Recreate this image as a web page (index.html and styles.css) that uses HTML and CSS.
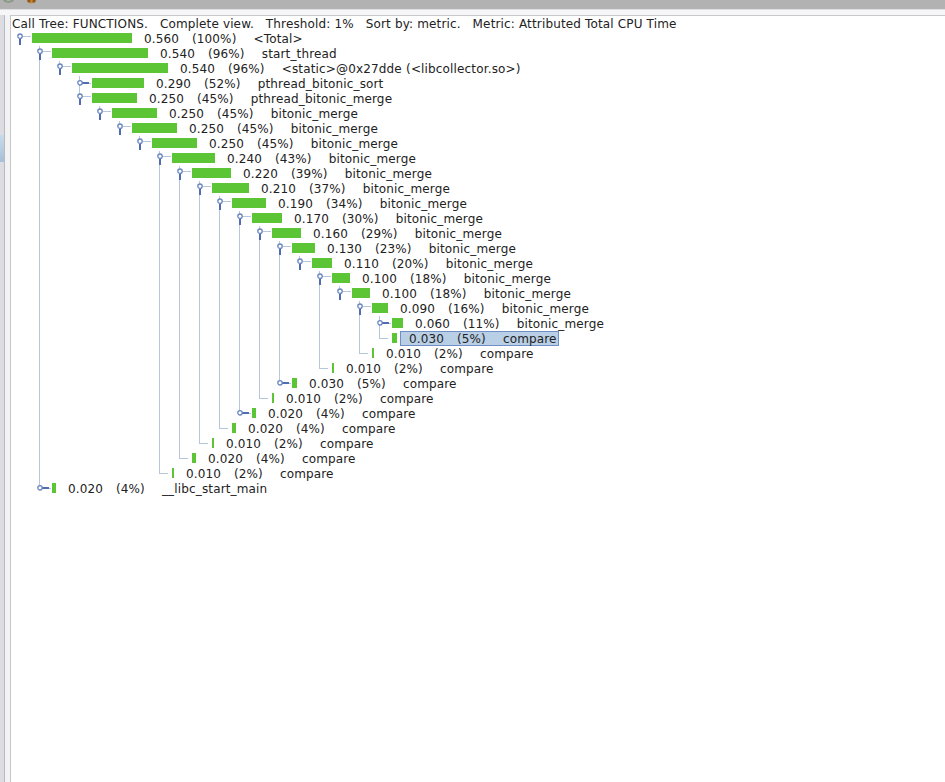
FILE: index.html
```html
<!DOCTYPE html>
<html>
<head>
<meta charset="utf-8">
<link rel="stylesheet" href="styles.css">
</head>
<body>
<div class="app">
  <div class="topbar">
    <svg class="tb-icons" width="45" height="9">
      <ellipse cx="8.5" cy="-3" rx="6.5" ry="6" fill="#8e9a88"/>
      <ellipse cx="8.5" cy="-3" rx="3.5" ry="3.5" fill="#c8d0c2"/>
      <circle cx="31.5" cy="-1.5" r="5" fill="#c98633"/>
      <circle cx="29" cy="1" r="1.6" fill="#8a5a20"/>
      <circle cx="34" cy="1" r="1.6" fill="#8a5a20"/>
    </svg>
  </div>
  <div class="band"></div>
  <div class="body">
    <div class="side"><div class="rail"><div class="tab"></div></div></div>
    <div class="panel">
      <div class="title">Call Tree: FUNCTIONS.   Complete view.   Threshold: 1%   Sort by: metric.   Metric: Attributed Total CPU Time</div>
      <div class="tree">
        <svg class="guides" width="934" height="470">
          <defs>
            <g id="exp">
              <line x1="8" y1="5.5" x2="17" y2="5.5" class="lt"/>
              <rect x="5" y="8" width="2" height="6" class="dk"/>
              <circle cx="6" cy="5.2" r="2.2" class="ring"/>
            </g>
            <g id="col">
              <rect x="8" y="6" width="7" height="2" class="dk"/>
              <line x1="15" y1="7" x2="17" y2="7" class="lt"/>
              <circle cx="6" cy="6.8" r="2.2" class="ring"/>
            </g>
            <g id="leaf">
              <line x1="5" y1="7.5" x2="14" y2="7.5" class="lt"/>
            </g>
          </defs>
          <g class="vlines">
            <line x1="28.5" y1="15" x2="28.5" y2="457"/>
            <line x1="48.5" y1="30" x2="48.5" y2="37"/>
            <line x1="68.5" y1="45" x2="68.5" y2="65"/>
            <line x1="88.5" y1="75" x2="88.5" y2="80"/>
            <line x1="108.5" y1="90" x2="108.5" y2="95"/>
            <line x1="128.5" y1="105" x2="128.5" y2="110"/>
            <line x1="148.5" y1="120" x2="148.5" y2="443"/>
            <line x1="168.5" y1="135" x2="168.5" y2="428"/>
            <line x1="188.5" y1="150" x2="188.5" y2="413"/>
            <line x1="208.5" y1="165" x2="208.5" y2="398"/>
            <line x1="228.5" y1="180" x2="228.5" y2="382"/>
            <line x1="248.5" y1="195" x2="248.5" y2="368"/>
            <line x1="268.5" y1="210" x2="268.5" y2="352"/>
            <line x1="288.5" y1="225" x2="288.5" y2="230"/>
            <line x1="308.5" y1="240" x2="308.5" y2="338"/>
            <line x1="328.5" y1="255" x2="328.5" y2="260"/>
            <line x1="348.5" y1="270" x2="348.5" y2="323"/>
            <line x1="368.5" y1="285" x2="368.5" y2="308"/>
          </g>
        </svg>
        <div class="row" style="padding-left:3px"><svg class="h"><use href="#exp"/></svg><div class="bar" style="width:100px"></div><span class="lbl">0.560   (100%)    &lt;Total&gt;</span></div>
        <div class="row" style="padding-left:23px"><svg class="h"><use href="#exp"/></svg><div class="bar" style="width:96px"></div><span class="lbl">0.540   (96%)    start_thread</span></div>
        <div class="row" style="padding-left:43px"><svg class="h"><use href="#exp"/></svg><div class="bar" style="width:96px"></div><span class="lbl">0.540   (96%)    &lt;static&gt;@0x27dde (&lt;libcollector.so&gt;)</span></div>
        <div class="row" style="padding-left:63px"><svg class="h"><use href="#col"/></svg><div class="bar" style="width:52px"></div><span class="lbl">0.290   (52%)    pthread_bitonic_sort</span></div>
        <div class="row" style="padding-left:63px"><svg class="h"><use href="#exp"/></svg><div class="bar" style="width:45px"></div><span class="lbl">0.250   (45%)    pthread_bitonic_merge</span></div>
        <div class="row" style="padding-left:83px"><svg class="h"><use href="#exp"/></svg><div class="bar" style="width:45px"></div><span class="lbl">0.250   (45%)    bitonic_merge</span></div>
        <div class="row" style="padding-left:103px"><svg class="h"><use href="#exp"/></svg><div class="bar" style="width:45px"></div><span class="lbl">0.250   (45%)    bitonic_merge</span></div>
        <div class="row" style="padding-left:123px"><svg class="h"><use href="#exp"/></svg><div class="bar" style="width:45px"></div><span class="lbl">0.250   (45%)    bitonic_merge</span></div>
        <div class="row" style="padding-left:143px"><svg class="h"><use href="#exp"/></svg><div class="bar" style="width:43px"></div><span class="lbl">0.240   (43%)    bitonic_merge</span></div>
        <div class="row" style="padding-left:163px"><svg class="h"><use href="#exp"/></svg><div class="bar" style="width:39px"></div><span class="lbl">0.220   (39%)    bitonic_merge</span></div>
        <div class="row" style="padding-left:183px"><svg class="h"><use href="#exp"/></svg><div class="bar" style="width:37px"></div><span class="lbl">0.210   (37%)    bitonic_merge</span></div>
        <div class="row" style="padding-left:203px"><svg class="h"><use href="#exp"/></svg><div class="bar" style="width:34px"></div><span class="lbl">0.190   (34%)    bitonic_merge</span></div>
        <div class="row" style="padding-left:223px"><svg class="h"><use href="#exp"/></svg><div class="bar" style="width:30px"></div><span class="lbl">0.170   (30%)    bitonic_merge</span></div>
        <div class="row" style="padding-left:243px"><svg class="h"><use href="#exp"/></svg><div class="bar" style="width:29px"></div><span class="lbl">0.160   (29%)    bitonic_merge</span></div>
        <div class="row" style="padding-left:263px"><svg class="h"><use href="#exp"/></svg><div class="bar" style="width:23px"></div><span class="lbl">0.130   (23%)    bitonic_merge</span></div>
        <div class="row" style="padding-left:283px"><svg class="h"><use href="#exp"/></svg><div class="bar" style="width:20px"></div><span class="lbl">0.110   (20%)    bitonic_merge</span></div>
        <div class="row" style="padding-left:303px"><svg class="h"><use href="#exp"/></svg><div class="bar" style="width:18px"></div><span class="lbl">0.100   (18%)    bitonic_merge</span></div>
        <div class="row" style="padding-left:323px"><svg class="h"><use href="#exp"/></svg><div class="bar" style="width:18px"></div><span class="lbl">0.100   (18%)    bitonic_merge</span></div>
        <div class="row" style="padding-left:343px"><svg class="h"><use href="#exp"/></svg><div class="bar" style="width:16px"></div><span class="lbl">0.090   (16%)    bitonic_merge</span></div>
        <div class="row" style="padding-left:363px"><svg class="h"><use href="#col"/></svg><div class="bar" style="width:11px"></div><span class="lbl">0.060   (11%)    bitonic_merge</span></div>
        <div class="row" style="padding-left:363px"><svg class="h"><use href="#leaf"/></svg><div class="bar" style="width:5px"></div><span class="lbl sel">0.030   (5%)    compare</span></div>
        <div class="row" style="padding-left:343px"><svg class="h"><use href="#leaf"/></svg><div class="bar" style="width:2px"></div><span class="lbl">0.010   (2%)    compare</span></div>
        <div class="row" style="padding-left:303px"><svg class="h"><use href="#leaf"/></svg><div class="bar" style="width:2px"></div><span class="lbl">0.010   (2%)    compare</span></div>
        <div class="row" style="padding-left:263px"><svg class="h"><use href="#col"/></svg><div class="bar" style="width:5px"></div><span class="lbl">0.030   (5%)    compare</span></div>
        <div class="row" style="padding-left:243px"><svg class="h"><use href="#leaf"/></svg><div class="bar" style="width:2px"></div><span class="lbl">0.010   (2%)    compare</span></div>
        <div class="row" style="padding-left:223px"><svg class="h"><use href="#col"/></svg><div class="bar" style="width:4px"></div><span class="lbl">0.020   (4%)    compare</span></div>
        <div class="row" style="padding-left:203px"><svg class="h"><use href="#leaf"/></svg><div class="bar" style="width:4px"></div><span class="lbl">0.020   (4%)    compare</span></div>
        <div class="row" style="padding-left:183px"><svg class="h"><use href="#leaf"/></svg><div class="bar" style="width:2px"></div><span class="lbl">0.010   (2%)    compare</span></div>
        <div class="row" style="padding-left:163px"><svg class="h"><use href="#leaf"/></svg><div class="bar" style="width:4px"></div><span class="lbl">0.020   (4%)    compare</span></div>
        <div class="row" style="padding-left:143px"><svg class="h"><use href="#leaf"/></svg><div class="bar" style="width:2px"></div><span class="lbl">0.010   (2%)    compare</span></div>
        <div class="row" style="padding-left:23px"><svg class="h"><use href="#col"/></svg><div class="bar" style="width:4px"></div><span class="lbl">0.020   (4%)    __libc_start_main</span></div>
      </div>
    </div>
  </div>
</div>
</body>
</html>
```
FILE: styles.css
```css
* { box-sizing: border-box; }
html, body { margin: 0; padding: 0; background: #fff; }
body {
  font-family: "DejaVu Sans", "Liberation Sans", sans-serif;
  font-size: 12px;
  color: #222;
  letter-spacing: 0.15px;
}
.app {
  width: 945px;
  height: 782px;
  display: flex;
  flex-direction: column;
  overflow: hidden;
}
.topbar {
  flex: none;
  height: 10px;
  background: #b2b2b2;
  border-bottom: 1px solid #e0e0e2;
  overflow: hidden;
}
.tb-icons { display: block; }
.band {
  flex: none;
  height: 5px;
  background: #f6f6f9;
}
.body {
  flex: 1;
  display: flex;
  min-height: 0;
}
.side {
  flex: none;
  width: 10px;
  background: #f3f3f6;
}
.rail {
  width: 5px;
  height: 100%;
  background: #dcdce2;
  border-right: 1px solid #b9b9c1;
  padding-top: 120px;
}
.tab {
  height: 27px;
  background: linear-gradient(#c9dbea, #a7c0d8);
}
.panel {
  flex: 1;
  min-width: 0;
  background: #fff;
  border-left: 1px solid #c6c6c6;
  border-top: 1px solid #c9c9c9;
}
.title {
  height: 15px;
  line-height: 15px;
  padding: 1px 0 0 1px;
  white-space: pre;
}
.tree { position: relative; }
.guides {
  position: absolute;
  left: 0;
  top: 0;
  z-index: 0;
}
.vlines line, .lt {
  stroke: #b5c7dd;
  stroke-width: 1;
  shape-rendering: crispEdges;
}
.dk { fill: #4f6db0; }
.ring {
  fill: #fff;
  stroke: #6a86c0;
  stroke-width: 1.3;
}
.row {
  position: relative;
  z-index: 1;
  display: flex;
  align-items: flex-start;
  height: 15px;
}
.h {
  flex: none;
  display: block;
  width: 18px;
  height: 15px;
  overflow: visible;
}
.bar {
  flex: none;
  height: 10px;
  margin-top: 2px;
  background: #5bc536;
}
.lbl {
  height: 15px;
  margin-left: 3px;
  border: 1px solid transparent;
  padding: 1px 1px 0 8px;
  line-height: 13px;
  white-space: pre;
  word-spacing: 0.3px;
}
.lbl.sel {
  background: #b9cfe6;
  border-color: #6f8fc6;
}
```
